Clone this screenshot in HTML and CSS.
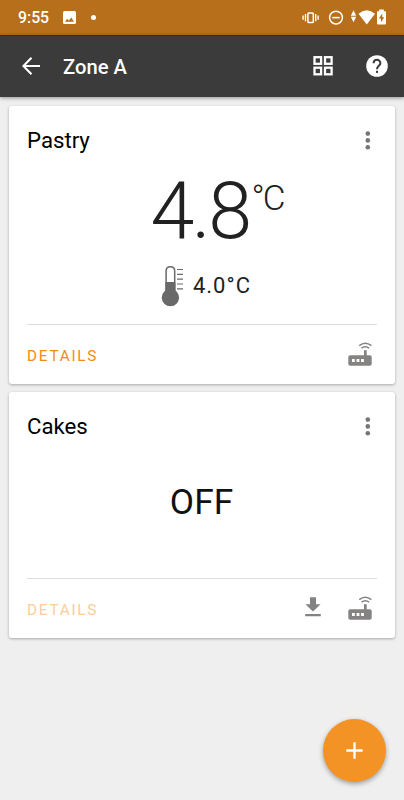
FILE: index.html
```html
<!DOCTYPE html>
<html lang="en">
<head>
  <meta charset="UTF-8" />
  <meta name="viewport" content="width=device-width, initial-scale=1.0"/>
  <title>Zone A</title>
  <link rel="stylesheet" href="styles.css">
</head>
<body>
  <!-- Status bar -->
  <div class="status-bar">
    <span class="time">9:55</span>
    <svg class="photo-icon" width="13" height="13" viewBox="0 0 13 13">
      <rect width="13" height="13" rx="1.5" fill="#fff"/>
      <path d="M2 10.8L4.2 7.8L5.8 9.4L8.4 6.4L11 10.8Z" fill="#b76f1b"/>
    </svg>
    <span class="dot"></span>
    <svg class="status-icons" width="86" height="18" viewBox="0 0 86 18">
      <g fill="none" stroke="#fff">
        <rect x="5.9" y="3.9" width="5.4" height="9.6" rx="0.8" stroke-width="1.5"/>
        <path d="M3.5 5V12.3M13.7 5V12.3M1.1 6.6V10.7M16.1 6.6V10.7" stroke-width="1.4"/>
        <circle cx="34" cy="8.6" r="6.4" stroke-width="1.5"/>
        <path d="M30.3 8.6H37.7" stroke-width="1.6"/>
      </g>
      <path d="M51.5 1.2L54.2 6.8H48.8ZM51.5 13.2L54.2 7.8H48.8Z" fill="#fff"/>
      <path d="M56.5 4.8Q64.8 -2.4 73 4.8L64.8 15.6Z" fill="#fff"/>
      <path d="M77.2 0.6H81.8V2.2H83.2Q84 2.2 84 3V14.6Q84 15.4 83.2 15.4H75.8Q75 15.4 75 14.6V3Q75 2.2 75.8 2.2H77.2Z" fill="#fff"/>
      <path d="M80.3 4.6L76.8 9.6H79V13.2L82.3 8.2H80.3Z" fill="#b76f1b"/>
    </svg>
  </div>

  <!-- Header -->
  <div class="header">
    <svg class="back" width="18" height="18" viewBox="0 0 18 18" fill="none" stroke="#fff" stroke-width="2.1">
      <path d="M18 9H1.4M9.5 0.8L1.4 9L9.5 17.2"/>
    </svg>
    <span class="title">Zone A</span>
    <svg class="grid-icon" width="20" height="20" viewBox="0 0 20 20" fill="none" stroke="#fff" stroke-width="2.3">
      <rect x="1.5" y="1.2" width="6.6" height="6.6"/>
      <rect x="12" y="1.2" width="6.6" height="6.6"/>
      <rect x="1.5" y="11.7" width="6.6" height="6.6"/>
      <rect x="12" y="11.7" width="6.6" height="6.6"/>
    </svg>
    <svg class="help-icon" width="22" height="22" viewBox="0 0 22 22">
      <circle cx="11" cy="11" r="10.8" fill="#fff"/>
      <path d="M7.6 8.3C7.6 3.7 14.4 3.7 14.4 8.2C14.4 10.7 11 11 11 14.2" fill="none" stroke="#3b3b3b" stroke-width="2"/>
      <rect x="10" y="15.8" width="2" height="2.1" fill="#3b3b3b"/>
    </svg>
  </div>

  <!-- Shared icons -->
  <svg class="symbols" width="0" height="0">
    <symbol id="more" viewBox="0 0 6 20">
      <g fill="#757575">
        <circle cx="2.8" cy="2.6" r="2.3"/>
        <circle cx="2.8" cy="9.4" r="2.3"/>
        <circle cx="2.8" cy="16.2" r="2.3"/>
      </g>
    </symbol>
    <symbol id="router" viewBox="0 0 24 24">
      <g fill="none" stroke="#858382" stroke-width="1.5">
        <path d="M11.2 3.6Q17.3 -1.2 23.4 3.6"/>
        <path d="M13.5 6.2Q17.3 3.2 21.1 6.2"/>
      </g>
      <rect x="16" y="8.2" width="2.7" height="6" fill="#858382"/>
      <rect x="0.3" y="13.3" width="23.4" height="10.5" rx="2" fill="#858382"/>
      <path d="M4 17H6.8V20H4ZM8.6 17H11.4V20H8.6ZM13.1 17H15.9V20H13.1Z" fill="#fff"/>
    </symbol>
  </svg>

  <!-- Content -->
  <div class="content">
    <div class="card">
      <div class="card-header">
        <span class="name">Pastry</span>
        <svg class="more" width="6" height="20"><use href="#more"/></svg>
      </div>
      <div class="reading">
        <span class="value">4.8</span><span class="unit">°C</span>
      </div>
      <div class="setpoint">
        <svg width="23" height="42" viewBox="0 0 23 42">
          <path d="M5.1 26V6Q5.1 1.8 9.4 1.8Q13.7 1.8 13.7 6V26" fill="#fff" stroke="#696969" stroke-width="1.5"/>
          <path d="M4.4 17H14.4V26.5H4.4Z" fill="#696969"/>
          <circle cx="9.4" cy="32.6" r="8.7" fill="#696969"/>
          <path d="M16 4.5H22M16 9.4H22M16 14.2H22M16 19H22M16 23.8H22" stroke="#696969" stroke-width="1.2"/>
        </svg>
        <span class="target">4.0°C</span>
      </div>
      <div class="card-footer">
        <span class="details">DETAILS</span>
        <svg class="router" width="24" height="24"><use href="#router"/></svg>
      </div>
    </div>

    <div class="card">
      <div class="card-header">
        <span class="name">Cakes</span>
        <svg class="more" width="6" height="20"><use href="#more"/></svg>
      </div>
      <div class="off">OFF</div>
      <div class="card-footer">
        <span class="details disabled">DETAILS</span>
        <svg class="download" width="16" height="20" viewBox="0 0 16 20" fill="#858382">
          <path d="M5 0.3H11V7.2H15.6L8 14.6L0.4 7.2H5ZM0.2 17H15.8V19.2H0.2Z"/>
        </svg>
        <svg class="router" width="24" height="24"><use href="#router"/></svg>
      </div>
    </div>
  </div>

  <!-- Add button -->
  <div class="fab">
    <svg width="17" height="17" viewBox="0 0 17 17" stroke="#fff" stroke-width="2.3">
      <path d="M8.5 0.3V16.7M0.3 8.5H16.7"/>
    </svg>
  </div>
</body>
</html>
```

FILE: styles.css
```css
* {
  box-sizing: border-box;
}

body {
  margin: 0;
  height: 800px;
  overflow: hidden;
  background: #efefef;
  font-family: Roboto, sans-serif;
  color: #000;
}

svg {
  display: block;
  flex-shrink: 0;
}

.symbols {
  position: absolute;
}

.status-bar {
  display: flex;
  align-items: center;
  height: 35px;
  padding: 0 16px 0 18px;
  background: #b76f1b;
  color: #fff;
}

.time {
  width: 45px;
  font-size: 15.8px;
  font-weight: 500;
}

.dot {
  width: 5px;
  height: 5px;
  margin-left: 15px;
  border-radius: 50%;
  background: #fff;
}

.status-icons {
  margin-left: auto;
}

.header {
  display: flex;
  align-items: center;
  height: 62px;
  padding: 0 16px 1px 22px;
  border-top: 1px solid #2c2f2c;
  background: #3b3b3b;
  color: #fff;
  box-shadow: 0 1px 4px rgba(0, 0, 0, 0.4);
}

.title {
  margin-left: 23px;
  padding-top: 2px;
  font-size: 20.2px;
  font-weight: 500;
}

.grid-icon {
  margin-left: auto;
}

.help-icon {
  margin-left: 33px;
}

.content {
  display: flex;
  flex-direction: column;
  gap: 8px;
  padding: 9px 9px 0;
}

.card {
  padding: 0 18px;
  border-radius: 3px;
  background: #fff;
  box-shadow: 0 1px 3px rgba(0, 0, 0, 0.3);
}

.card-header {
  display: flex;
  align-items: center;
  justify-content: space-between;
  height: 69px;
}

.name {
  font-size: 22.2px;
  line-height: 25px;
}

.more {
  margin-right: 6px;
}

.reading {
  display: flex;
  justify-content: center;
  height: 70px;
  padding-left: 30px;
  color: #212121;
}

.value {
  font-size: 79px;
  font-weight: 300;
  line-height: 72px;
  letter-spacing: -2.5px;
}

.unit {
  margin-left: 2px;
  font-size: 35px;
  font-weight: 300;
  line-height: 48px;
  letter-spacing: -2px;
}

.setpoint {
  display: flex;
  align-items: center;
  justify-content: center;
  height: 79px;
  gap: 9px;
  padding: 2px 0 0 8px;
}

.target {
  font-size: 22px;
  letter-spacing: 1px;
  color: #212121;
}

.off {
  height: 117px;
  padding-right: 1px;
  font-size: 35.3px;
  line-height: 82px;
  text-align: center;
  color: #111;
}

.card-footer {
  display: flex;
  align-items: center;
  height: 60px;
  border-top: 1px solid #dedede;
}

.details {
  margin-right: auto;
  padding-top: 2px;
  font-size: 15.3px;
  font-weight: 450;
  letter-spacing: 1.75px;
  color: #f38a15;
}

.details.disabled {
  color: #fbcd9b;
}

.download {
  margin: 0 27px 3px 0;
}

.router {
  margin: 0 5px 2px 0;
}

.fab {
  position: fixed;
  right: 18px;
  bottom: 18px;
  display: flex;
  align-items: center;
  justify-content: center;
  width: 63px;
  height: 63px;
  border-radius: 50%;
  background: #f39325;
  box-shadow: 0 2px 5px rgba(0, 0, 0, 0.35);
}
```
